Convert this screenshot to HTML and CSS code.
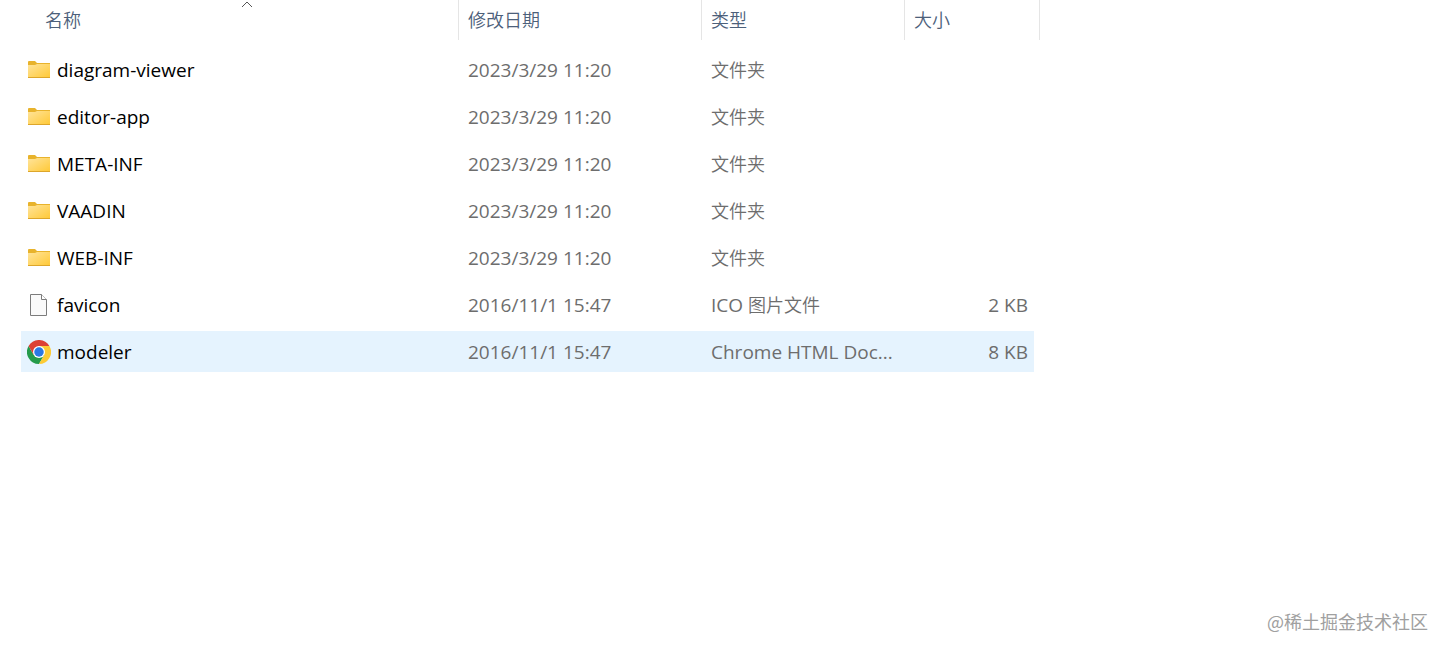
FILE: index.html
```html
<!DOCTYPE html>
<html lang="zh-CN">
<head>
<meta charset="utf-8">
<title>文件列表</title>
<link rel="stylesheet" href="styles.css">
</head>
<body>
<svg class="defs" aria-hidden="true">
  <defs>
    <linearGradient id="folder-face" x1="0" y1="0" x2="1" y2="1">
      <stop offset="0" stop-color="#ffe49b"/>
      <stop offset="1" stop-color="#ffc937"/>
    </linearGradient>
    <symbol id="folder" viewBox="0 0 24 24">
      <path d="M1 4a1 1 0 0 1 1-1h6l2 2h13v4H1z" fill="#e8b32c"/>
      <path d="M1 7h7l2-1h13v13.5H1z" fill="url(#folder-face)"/>
      <path d="M1 19h22v1H1z" fill="#dda62b"/>
    </symbol>
    <symbol id="file" viewBox="0 0 24 24">
      <path d="M3.5 1.5h11l5 5v16h-16z" fill="#fafafa" stroke="#7c7c7c"/>
      <path d="M14.5 1.5v5h5" fill="#fff" stroke="#7c7c7c"/>
    </symbol>
    <symbol id="chrome" viewBox="0 0 48 48">
      <path d="M3.2 12A24 24 0 0 0 24 48l10.4-18L24 24 13.6 30z" fill="#259b4b"/>
      <path d="M44.8 12A24 24 0 0 1 24 48l10.4-18L24 12z" fill="#fccb35"/>
      <path d="M3.2 12A24 24 0 0 1 44.8 12H24L13.6 30z" fill="#dd4035"/>
      <circle cx="24" cy="24" r="12" fill="#fff"/>
      <circle cx="24" cy="24" r="9.5" fill="#2b78e4"/>
    </symbol>
  </defs>
</svg>
<main class="explorer">
  <table class="files">
    <colgroup>
      <col class="col-name"><col class="col-date"><col class="col-type"><col class="col-size"><col class="col-end">
    </colgroup>
    <thead>
      <tr>
        <th aria-sort="ascending"><button class="head head-name" type="button">名称<svg class="sort" viewBox="0 0 12 7" aria-hidden="true"><path d="M1 6l5-5 5 5" fill="none" stroke="#555"/></svg></button></th>
        <th><button class="head" type="button">修改日期</button></th>
        <th><button class="head" type="button">类型</button></th>
        <th colspan="2"><button class="head" type="button">大小</button></th>
      </tr>
    </thead>
    <tbody>
      <tr><td class="name"><span class="entry"><svg class="icon"><use href="#folder"/></svg>diagram-viewer</span></td><td>2023/3/29 11:20</td><td><span class="han">文件夹</span></td><td></td></tr>
      <tr><td class="name"><span class="entry"><svg class="icon"><use href="#folder"/></svg>editor-app</span></td><td>2023/3/29 11:20</td><td><span class="han">文件夹</span></td><td></td></tr>
      <tr><td class="name"><span class="entry"><svg class="icon"><use href="#folder"/></svg>META-INF</span></td><td>2023/3/29 11:20</td><td><span class="han">文件夹</span></td><td></td></tr>
      <tr><td class="name"><span class="entry"><svg class="icon"><use href="#folder"/></svg>VAADIN</span></td><td>2023/3/29 11:20</td><td><span class="han">文件夹</span></td><td></td></tr>
      <tr><td class="name"><span class="entry"><svg class="icon"><use href="#folder"/></svg>WEB-INF</span></td><td>2023/3/29 11:20</td><td><span class="han">文件夹</span></td><td></td></tr>
      <tr><td class="name"><span class="entry"><svg class="icon"><use href="#file"/></svg>favicon</span></td><td>2016/11/1 15:47</td><td>ICO <span class="han">图片文件</span></td><td class="size">2 KB</td></tr>
      <tr class="active"><td class="name"><span class="entry"><svg class="icon"><use href="#chrome"/></svg>modeler</span></td><td>2016/11/1 15:47</td><td>Chrome HTML Doc...</td><td class="size">8 KB</td></tr>
    </tbody>
  </table>
  <footer class="credit">@稀土掘金技术社区</footer>
</main>
</body>
</html>
```
FILE: styles.css
```css
* { box-sizing: border-box; }

body {
  margin: 0;
  background: #fff;
  color: #6d6d6d;
  font-family: "Open Sans", "Noto Sans CJK SC", sans-serif;
  font-size: 19px;
  line-height: 24px;
}

.defs { position: absolute; width: 0; height: 0; }

.explorer {
  display: flex;
  flex-direction: column;
  min-height: 100vh;
  padding-left: 21px;
}

.files {
  width: 1019px;
  table-layout: fixed;
  border-collapse: separate;
  border-spacing: 0;
}

.col-name { width: 438px; }
.col-date { width: 243px; }
.col-type { width: 203px; }
.col-size { width: 129px; }
.col-end { width: 6px; }

th { padding: 0 0 9px; }

.head {
  display: block;
  position: relative;
  width: 100%;
  height: 40px;
  padding: 0 9px 2px;
  border: 0;
  border-right: 1px solid #e5e5e5;
  background: none;
  color: #4c607a;
  font-family: "Noto Sans CJK SC", sans-serif;
  font-size: 18px;
  font-weight: 350;
  line-height: 24px;
  text-align: left;
}

.head-name { padding-left: 24px; }

.sort {
  position: absolute;
  top: 1px;
  left: 220px;
  width: 12px;
  height: 7px;
}

td {
  height: 47px;
  padding: 0 9px;
  border-bottom: 6px solid transparent;
  background-clip: padding-box;
  white-space: nowrap;
}

.name { padding: 0 6px; color: #000; }

.entry { display: flex; align-items: center; gap: 6px; }

.icon { width: 24px; height: 24px; flex: none; }

.han {
  font-family: "Noto Sans CJK SC", sans-serif;
  font-size: 18px;
  font-weight: 350;
}

.size { padding-right: 6px; text-align: right; }

.active td { background-color: #e5f3fe; }

.credit {
  margin-top: auto;
  padding: 0 19px 19px 0;
  color: #a0a0a0;
  font-family: "Noto Sans CJK SC", sans-serif;
  font-size: 18px;
  text-align: right;
}
```
